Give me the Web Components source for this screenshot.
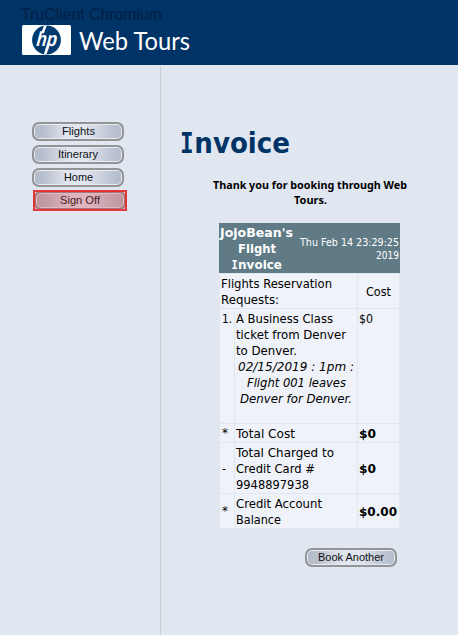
<!DOCTYPE html>
<html lang="en"><head><meta charset="utf-8"><title>Web Tours</title>
<style>body{margin:0;background:#e0e7f1;overflow:hidden}</style></head><body>
<web-tours></web-tours>
<script>
// A single line of text set to an exact measure.
class TextLine extends HTMLElement{
 connectedCallback(){
  const a=(n,d)=>this.getAttribute(n)||d,w=+a('w'),h=+a('h',16),b=a('b',13);
  const t=this.textContent,serifI=this.hasAttribute('serif-i');
  const r=this.attachShadow({mode:'open'});
  r.innerHTML=`<style>:host{display:block;width:${w}px;height:${h}px}svg{display:block;overflow:visible}
  text{font:${a('st','normal')} ${a('wt','400')} ${a('s',12.3)}px ${a('f',"'DejaVu Sans'")},sans-serif;fill:${a('c','#000')}}
  .i{font-family:'DejaVu Sans Mono'}</style><svg width="${w}" height="${h}"></svg>`;
  const fit=(tag,s,x,len,c='')=>`<${tag} class="${c}" x="${x}" y="${b}" textLength="${len}" lengthAdjust="spacingAndGlyphs">${s}</${tag}>`;
  r.querySelector('svg').innerHTML=serifI?'<text>'+fit('tspan',t[0],-w*.01,w*.125,'i')+fit('tspan',t.slice(1),w*.122,w*.878)+'</text>':fit('text',t,0,w);
 }
}
customElements.define('text-line',TextLine);

class TourButton extends HTMLElement{
 connectedCallback(){
  const r=this.attachShadow({mode:'open'});
  r.innerHTML=`<style>:host{display:grid;position:relative;box-sizing:border-box;width:92px;height:19px;border:2px solid #929498;border-radius:7px;place-items:center;
  background:linear-gradient(90deg,#b3bac8 0,#bac1ce 12%,#dde4ee 37%,#e0e7f1 58%,#c2c9d6 84%,#b3bac8 100%);box-shadow:inset 0 0 0 1px #e6ebf2}
  :host([active])::after{content:"";position:absolute;box-sizing:border-box;left:-3px;top:-3px;width:94px;height:21px;border:2px solid rgba(232,35,35,.85);background:rgba(214,50,58,.27)}
  </style><slot></slot>`;
 }
}
customElements.define('tour-button',TourButton);

class TourHeader extends HTMLElement{
 connectedCallback(){
  this.attachShadow({mode:'open'}).innerHTML=`<style>:host{display:block;box-sizing:border-box;height:65px;padding:6px 0 0 21px;background:#036}
  .brand{display:flex;gap:8px;padding-left:1px;margin-top:-1px}svg{display:block}</style>
  <text-line w="141" h="20" b="14" s="16" f="'Liberation Sans'" c="#001f43">TruClient Chromium</text-line>
  <div class="brand"><svg width="49" height="30" viewBox="0 0 49 30"><defs><clipPath id="k"><circle cx="24.5" cy="15" r="14.5"/></clipPath></defs>
  <rect width="49" height="30" rx="1.5" fill="#fff"/><circle cx="24.5" cy="15" r="14.4" fill="#003b70"/>
  <g clip-path="url(#k)" stroke="#fff" stroke-width="2.6" fill="none"><path d="M24 -1L20.6 8M26.6 19L22.6 31"/></g>
  <text transform="translate(14 20.5) skewX(-6)" x="0" y="0" textLength="20.5" lengthAdjust="spacingAndGlyphs" style="font:italic bold 20.5px 'Liberation Sans',sans-serif" fill="#fff">hp</text></svg>
  <text-line w="111" h="30" b="25" s="24.5" f="Lato" c="#fff">Web Tours</text-line></div>`;
 }
}
customElements.define('tour-header',TourHeader);

class InvoiceTable extends HTMLElement{
 connectedCallback(){
  this.attachShadow({mode:'open'}).innerHTML=`<style>
  :host{display:block;width:181px}
  .head{height:50px;background:#607b86;display:flex;justify-content:space-between}
  .title{display:flex;flex-direction:column;align-items:center;width:73px;margin:1px 0 0 1px}
  .date{display:flex;flex-direction:column;align-items:flex-end;justify-content:center;padding-right:1px}
  .grid{display:grid;margin:1px 1px 0;grid-template-columns:14px 122px 41px;gap:1px;grid-template-rows:34px 114px 18px 50px 34px}
  .grid>div{background:#eff2f8;padding:1px;box-sizing:border-box;display:flex;flex-direction:column;justify-content:center}
  .grid>.top{justify-content:flex-start}.span{grid-column:span 2}.grid>.mid{align-items:center}
  .it{display:flex;flex-direction:column;align-items:center}
  .grid>.mk{padding-left:2px}.grid>.star{padding-bottom:4px}
  </style>
  <div class="head"><div class="title">
  <text-line w="73" wt="700" s="12.8" c="#fff">JojoBean's</text-line><text-line w="38" wt="700" s="12.8" c="#fff">Flight</text-line><text-line w="50" wt="700" s="12.8" c="#fff" serif-i>Invoice</text-line></div>
  <div class="date"><text-line w="99" h="13" b="11" s="11" c="#fff">Thu Feb 14 23:29:25</text-line><text-line w="23" h="13" b="11" s="11" c="#fff">2019</text-line></div></div>
  <div class="grid">
  <div class="span"><text-line w="111">Flights Reservation</text-line><text-line w="58">Requests:</text-line></div><div class="mid"><text-line w="25">Cost</text-line></div>
  <div class="top mk"><text-line w="10">1.</text-line></div><div class="top"><text-line w="97">A Business Class</text-line><text-line w="110">ticket from Denver</text-line><text-line w="61">to Denver.</text-line><div class="it"><text-line w="116" st="italic">02/15/2019 : 1pm :</text-line><text-line w="99" st="italic">Flight 001 leaves</text-line><text-line w="112" st="italic">Denver for Denver.</text-line></div></div><div class="top"><text-line w="14">$0</text-line></div>
  <div class="mk star"><text-line w="6">*</text-line></div><div><text-line w="59">Total Cost</text-line></div><div><text-line w="17" wt="700">$0</text-line></div>
  <div class="mk"><text-line w="4">-</text-line></div><div><text-line w="98">Total Charged to</text-line><text-line w="79">Credit Card #</text-line><text-line w="73">9948897938</text-line></div><div><text-line w="17" wt="700">$0</text-line></div>
  <div class="mk star"><text-line w="6">*</text-line></div><div><text-line w="86">Credit Account</text-line><text-line w="45">Balance</text-line></div><div><text-line w="38" wt="700">$0.00</text-line></div>
  </div>`;
 }
}
customElements.define('invoice-table',InvoiceTable);

class WebTours extends HTMLElement{
 connectedCallback(){
  const B=(t,w,x='')=>`<tour-button ${x}><text-line w="${w}" h="15" b="11" s="11" f="'Liberation Sans'" c="#111">${t}</text-line></tour-button>`;
  this.attachShadow({mode:'open'}).innerHTML=`<style>:host{display:block;width:458px;height:635px}
  .body{display:grid;grid-template-columns:160px 1fr;height:570px}
  nav{display:flex;flex-direction:column;gap:4px;padding:57px 0 0 32px}nav>:last-child{margin-left:2px}
  main{border-left:1px solid #ccc;margin-top:1px;padding:63px 0 0 20px}
  .msg{display:flex;flex-direction:column;align-items:center;width:194px;margin:18px 0 0 32px}
  invoice-table{margin:14px 0 0 38px}.again{margin:20px 0 0 124px}
  </style><tour-header></tour-header><div class="body"><nav>${B('Flights',33)}${B('Itinerary',40)}${B('Home',29)}${B('Sign Off',40,'active')}</nav>
  <main><text-line w="109" h="32" b="24" s="29" wt="700" c="#036" serif-i>Invoice</text-line>
  <div class="msg"><text-line w="194" h="15" b="10" s="11" f="'Noto Sans'" wt="700">Thank you for booking through Web</text-line><text-line w="33" h="15" b="10" s="11" f="'Noto Sans'" wt="700">Tours.</text-line></div>
  <invoice-table></invoice-table><div class="again">${B('Book Another',66)}</div></main></div>`;
 }
}
customElements.define('web-tours',WebTours);
</script></body></html>
